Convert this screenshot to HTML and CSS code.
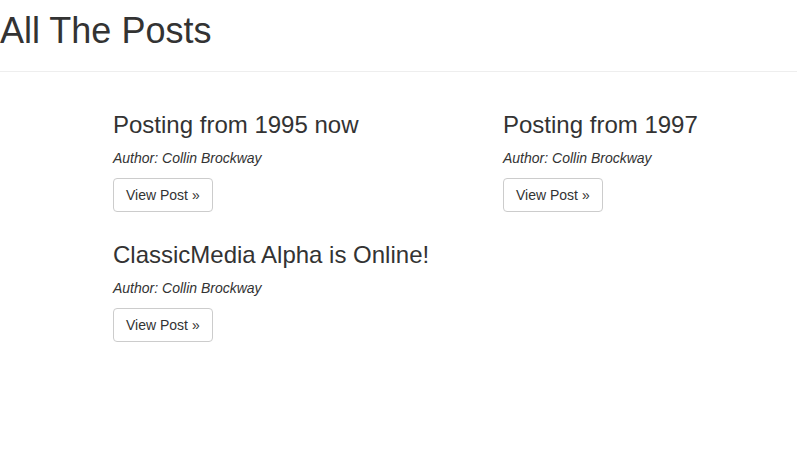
FILE: index.html
```html
<!DOCTYPE html>
<html>
<head>
<meta charset="utf-8">
<link rel="stylesheet" href="styles.css">
</head>
<body>
<header class="page-header">
  <h1 class="page-title">All The Posts</h1>
</header>
<main class="posts">
  <article class="post">
    <h2 class="post-title">Posting from 1995 now</h2>
    <p class="post-author">Author: Collin Brockway</p>
    <a class="btn" href="#">View Post &raquo;</a>
  </article>
  <article class="post">
    <h2 class="post-title">Posting from 1997</h2>
    <p class="post-author">Author: Collin Brockway</p>
    <a class="btn" href="#">View Post &raquo;</a>
  </article>
  <article class="post">
    <h2 class="post-title">ClassicMedia Alpha is Online!</h2>
    <p class="post-author">Author: Collin Brockway</p>
    <a class="btn" href="#">View Post &raquo;</a>
  </article>
</main>
</body>
</html>
```
FILE: styles.css
```css
* { box-sizing: border-box; }
html, body {
  margin: 0;
  background: #fff;
}
body {
  font-family: "Liberation Sans", Arial, sans-serif;
  font-size: 14px;
  line-height: 1.428571;
  color: #333;
}
.page-header {
  padding: 11px 0 20px;
  border-bottom: 1px solid #eee;
}
.page-title {
  margin: 0;
  font-size: 36px;
  font-weight: 500;
  line-height: 1.1;
}
.posts {
  display: grid;
  grid-template-columns: 390px minmax(0, 1fr);
  padding: 40px 0 0 113px;
  row-gap: 29.6px;
}
.post-title {
  margin: 0 0 11px;
  font-size: 24px;
  font-weight: 500;
  line-height: 1.1;
}
.post-author {
  margin: 0 0 9px;
  font-style: italic;
}
.btn {
  display: inline-block;
  padding: 6px 12px;
  font-size: 14px;
  line-height: 20px;
  color: #333;
  text-decoration: none;
  background: #fff;
  border: 1px solid #ccc;
  border-radius: 4px;
}
```
